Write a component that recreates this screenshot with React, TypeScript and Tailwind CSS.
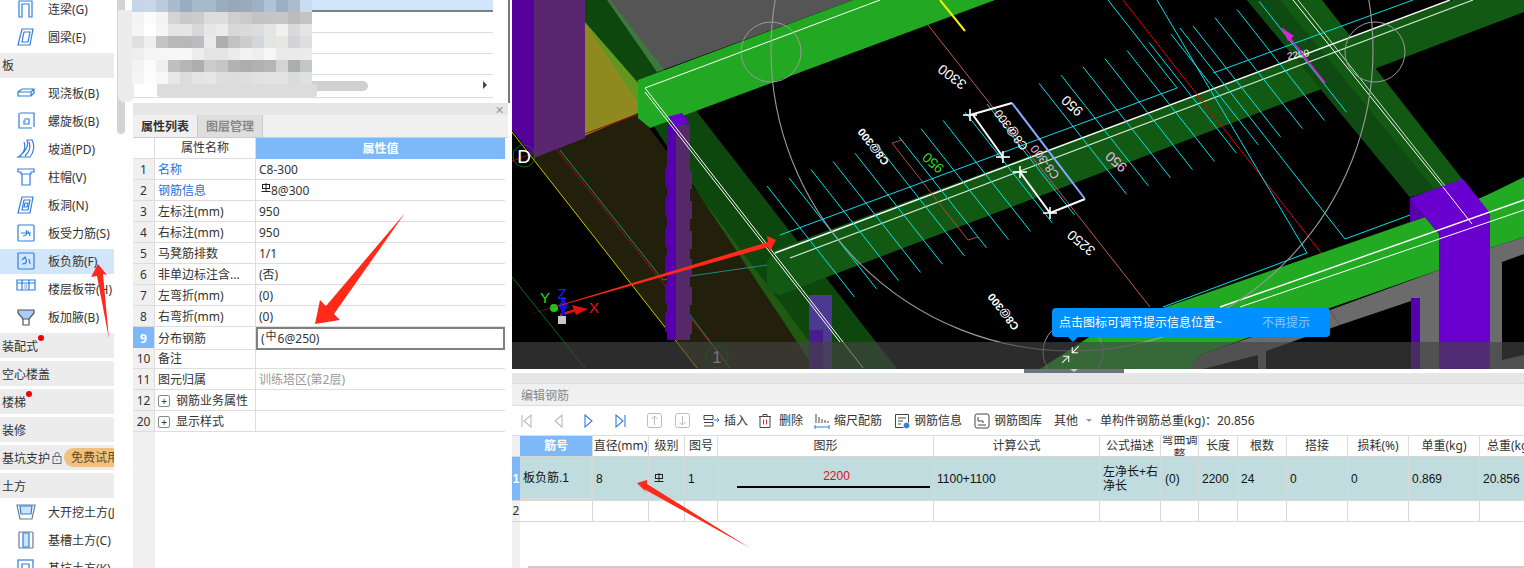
import React from "react";
import { Minimize2 } from "lucide-react";

const FONT = { fontFamily: '"Noto Sans", "Noto Sans CJK SC", sans-serif' };

const blue = "#2f7fe0";

function SideIcon({ children }: { children: React.ReactNode }) {
	return (
		<svg width="20" height="20" viewBox="0 0 20 20" fill="none" stroke={blue} strokeWidth="1.2" className="shrink-0">
			{children}
		</svg>
	);
}

const sideIcons: Record<string, React.ReactNode> = {
	lian: <path d="M3 18V2h13v16h-3V5H6v13z" />,
	quan: (
		<>
			<path d="M6 2h11l-3 16H2z" />
			<path d="M8 5h6l-2 10H6z" />
		</>
	),
	xian: <path d="M2 9l4-3h12v4l-3 3H2zM2 9h13v4M15 9l3-3" />,
	luo: (
		<>
			<path d="M4 2h14v14M3 2v15h13" />
			<path d="M8 8h5v5H8v-3h2" />
		</>
	),
	po: <path d="M11 1c2 5-1 12-9 17h12c4-5 5-12 2-17zM8 3c2 5 0 10-4 14M13 3c2 5 0 10-4 14" />,
	zhu: <path d="M2 2h16v3h-3v2H5V5H2zM6 7v11h8V7" />,
	dong: (
		<>
			<path d="M6 2h11l-3 16H2z" />
			<path d="M8 5h6l-2 10H6z" />
			<path d="M9 8h3l-1 4H8z" />
		</>
	),
	shou: (
		<>
			<rect x="2" y="2" width="16" height="16" rx="1" />
			<path d="M5 10h10M7 13c3 0 5-2 3-6M12 8l2 5" />
		</>
	),
	fu: (
		<>
			<rect x="2" y="2" width="16" height="16" rx="1" />
			<path d="M6 13c4 0 6-2 3-7l-3 3M13 8l1 5" />
		</>
	),
	dai: (
		<>
			<path d="M1 1h18v10H1zM1 4h18M6 1v10M13 1v10" />
			<path d="M9 4v7M10.5 4v7" stroke="#9cc4f4" />
		</>
	),
	ye: (
		<>
			<path d="M2 3h16v3l-5 6H7L2 6z" fill="#a9cdf6" stroke="#555" />
			<path d="M7 12v6h6v-6" stroke="#555" />
		</>
	),
	da: (
		<>
			<path d="M1 3h18l-3 14H4z" stroke="#6b7a90" />
			<path d="M4 4h12l-1 8H5z" fill="#cfe3fa" />
		</>
	),
	cao: (
		<>
			<rect x="3" y="2" width="14" height="16" rx="1" stroke="#6b7a90" />
			<path d="M7 3h6v14H7z" fill="#cfe3fa" />
		</>
	),
	keng: (
		<>
			<rect x="2" y="2" width="15" height="16" />
			<path d="M6 6h7v10H6z" />
		</>
	),
};

function SideItem({ icon, label, active }: { icon: string; label: string; active?: boolean }) {
	return (
		<div className="flex items-center h-[28px]">
			<div className={`flex items-center w-[114px] h-[25px] pl-[16px] gap-[12px] whitespace-nowrap overflow-hidden ${active ? "bg-[#d2e6fb]" : ""}`}>
				<SideIcon>{sideIcons[icon]}</SideIcon>
				<span className="pt-[2px]">{label}</span>
			</div>
		</div>
	);
}

function SideHead({ label, dot, children }: { label: string; dot?: number; children?: React.ReactNode }) {
	return (
		<div className="relative flex items-center w-[114px] h-[25px] mb-[3px] pl-[2px] bg-[#ececec] whitespace-nowrap overflow-hidden">
			<span className="pt-[2px]">{label}</span>
			{children}
			{dot ? <span className={`absolute top-[2px] w-[6px] h-[6px] rounded-full bg-[#f00000] ${dot === 1 ? "left-[38px]" : "left-[26px]"}`} /> : null}
		</div>
	);
}

function Sidebar() {
	return (
		<div className="relative w-[133px] shrink-0 -mt-[5px] text-[12px] text-[#333]">
			<SideItem icon="lian" label="连梁(G)" />
			<SideItem icon="quan" label="圆梁(E)" />
			<div className="flex items-center w-[114px] h-[25px] mt-[2px] mb-px pl-[2px] bg-[#ececec]">板</div>
			<SideItem icon="xian" label="现浇板(B)" />
			<SideItem icon="luo" label="螺旋板(B)" />
			<SideItem icon="po" label="坡道(PD)" />
			<SideItem icon="zhu" label="柱帽(V)" />
			<SideItem icon="dong" label="板洞(N)" />
			<SideItem icon="shou" label="板受力筋(S)" />
			<SideItem icon="fu" label="板负筋(F)" active />
			<SideItem icon="dai" label="楼层板带(H)" />
			<SideItem icon="ye" label="板加腋(B)" />
			<div className="h-[2px]" />
			<SideHead label="装配式" dot={1} />
			<SideHead label="空心楼盖" />
			<SideHead label="楼梯" dot={2} />
			<SideHead label="装修" />
			<SideHead label="基坑支护">
				<svg width="10" height="12" viewBox="0 0 10 12" fill="none" stroke="#667" className="ml-[2px] shrink-0">
					<rect x="1" y="4.5" width="8" height="7" />
					<path d="M3 4.5V2.5a2 2 0 014 0v2M5 7v2" />
				</svg>
				<span className="ml-[2px] pl-[7px] h-[19px] w-[60px] shrink-0 flex items-center rounded-l-full bg-[#eec27e] text-[#6b4a1a]">免费试用</span>
			</SideHead>
			<div className="flex items-center w-[114px] h-[25px] pl-[2px] bg-[#ececec]">
				<span className="pt-[2px]">土方</span>
			</div>
			<SideItem icon="da" label="大开挖土方(J" />
			<SideItem icon="cao" label="基槽土方(C)" />
			<SideItem icon="keng" label="基坑土方(K)" />
			<div className="absolute left-[117px] top-[5px] w-[8px] h-[134px] bg-[#d4d4d4] rounded-b-[4px]" />
		</div>
	);
}

const mosaic = [
	["c4d6e8", "c8d8e8", "bccbdb", "a8bccd", "98adc0", "a6b9ca", "a6b9ca", "9aacbe", "96a8ba", "98aabc", "9fb2c5", "afc4d9", "9cb0c4", "abbccd", "c9dcf0"],
	["f4f4f4", "fbfbfb", "f3f3f3", "d4d4d4", "c8c9cb", "cccccc", "dcdcdc", "dddddd", "cfcfcf", "cbcac8", "c3c3c3", "c5c5c5", "c6c6c6", "bcbcbc", "c4c4c4"],
	["f5f5f5", "fefefe", "f5f5f5", "e5e5e5", "e5e5e5", "d7d7d7", "e7e7e7", "ebebeb", "d7d7d7", "dadada", "dcdcdc", "e3e4e6", "f0f0f0", "dadada", "e5e5e5"],
	["e0e0e0", "eeeeee", "c4c4c4", "bdb8b8", "b8b8b8", "bcbcc0", "e8eae9", "adadad", "c2c2c0", "cdcdcd", "d3d7db", "e4e4e2", "e8e6e1", "d2d3d7", "dcdee0"],
	["eeeeee", "f5f5f5", "f6f6f6", "f6f6f6", "f6f8f7", "efedeb", "e4e4e4", "e4e4e4", "ebebeb", "f2f2f2", "eeeeee", "f6f6f6", "eaeaea", "eaeaea", "ebebeb"],
	["f3f3f3", "fbfbfb", "f0efed", "c0c0c0", "b5b6b8", "adadad", "cccccc", "c6c6c6", "b3b1b2", "adadab", "b2b0b1", "b5b5b5", "d4d4d4", "adadad", "c5c6c8"],
	["f5f5f5", "fdfdfd", "f8f8f8", "e8e8e8", "dcdcdc", "e4e4e4", "e6e6e6", "dedede", "dddddd", "dededc", "e0e2e1", "e2e4e3", "e3e3e3", "d8dcdb", "dde1e0"],
];

function Mosaic() {
	return (
		<>
			<div className="absolute left-[118px] top-[10px] w-[16px] h-[92px] bg-[#ececec] rounded-b-[6px]" />
			<div className="absolute left-[157px] top-[84px] w-[160px] h-[13px] bg-[#dcdcdc] rounded-[3px]" />
			<div className="absolute left-[132px] top-0 grid grid-cols-[repeat(15,12px)] auto-rows-[12px]">
				{mosaic.flat().map((c, i) => (
					<div key={i} style={{ backgroundColor: `#${c}` }} />
				))}
			</div>
		</>
	);
}

function TopList() {
	return (
		<div className="h-[103px] shrink-0 -ml-px">
			<div className="w-[361px] h-[12px] bg-[#d2e6fb] border-b-2 border-[#808080]" />
			<div className="w-[361px] h-[21px] border-b border-[#ddd]" />
			<div className="w-[361px] h-[21px] border-b border-[#ddd]" />
			<div className="w-[361px] h-[21px] border-b border-[#ddd]" />
			<div className="flex items-center w-[361px] h-[23px] border-b border-[#ddd] relative">
				<div className="ml-[25px] w-[211px] h-[10px] rounded-full bg-[#d0d0d0]" />
				<div className="absolute left-[351px] top-[6px] w-0 h-0 border-y-[4px] border-y-transparent border-l-[4px] border-l-[#445]" />
			</div>
		</div>
	);
}

const props: [string, string, string, string?][] = [
	["1", "名称", "C8-300", "blue"],
	["2", "钢筋信息", "sym:8@300", "blue"],
	["3", "左标注(mm)", "950"],
	["4", "右标注(mm)", "950"],
	["5", "马凳筋排数", "1/1"],
	["6", "非单边标注含...", "(否)"],
	["7", "左弯折(mm)", "(0)"],
	["8", "右弯折(mm)", "(0)"],
	["9", "分布钢筋", "(sel)"],
	["10", "备注", ""],
	["11", "图元归属", "训练塔区(第2层)", "gray"],
	["12", "+钢筋业务属性", ""],
	["20", "+显示样式", ""],
];

function RebarSym({ className }: { className?: string }) {
	return (
		<svg width="10" height="11" viewBox="0 0 10 11" fill="none" stroke="#222" strokeWidth="1" className={className}>
			<rect x="1.5" y="1.5" width="7" height="4" />
			<path d="M5 0v8M0.5 8.5h9" />
		</svg>
	);
}

function PropRow({ row }: { row: (typeof props)[number] }) {
	const [no, name, value, tone] = row;
	const selected = no === "9";
	const plus = name.startsWith("+");
	return (
		<div className="grid grid-cols-[22px_101px_249px] h-[21px]">
			<div className={`flex items-center justify-center pt-px border-r border-b border-[#ddd] ${selected ? "bg-[#7db8f8] text-white font-bold" : "bg-[#f0f0f0]"}`}>{no}</div>
			<div className={`flex items-center pl-[3px] pt-px border-r border-b border-[#ddd] whitespace-nowrap overflow-hidden ${tone === "blue" ? "text-[#2a6fe0]" : ""}`}>
				{plus ? (
					<>
						<span className="flex items-center justify-center w-[12px] h-[12px] mr-[6px] border border-[#888] rounded-[2px] text-[10px] leading-none">+</span>
						{name.slice(1)}
					</>
				) : (
					name
				)}
			</div>
			<div className={`flex items-center pl-[3px] pt-px whitespace-nowrap ${selected ? "border-2 border-[#808080] pl-[2px]" : "border-b border-[#ddd]"} ${tone === "gray" ? "text-[#999]" : ""}`}>
				{value === "sym:8@300" ? (
					<>
						<RebarSym className="ml-[2px] -mt-[4px]" />
						8@300
					</>
				) : selected ? (
					<>
						(<span className="text-[11px] -mt-[5px] mx-px">中</span>6@250)
					</>
				) : (
					value
				)}
			</div>
		</div>
	);
}

function PropertyPanel() {
	return (
		<div className="flex flex-col w-[375px] h-full shrink-0 text-[12px] text-[#333]">
			<TopList />
			<div className="flex-1 flex flex-col">
				<div className="flex items-center justify-end h-[12px] pr-[4px] bg-[#e6e6e6] text-[#999] text-[11px] leading-none">✕</div>
				<div className="flex h-[23px] bg-[#f0f0f0] border-b border-[#ccc]">
					<div className="flex items-center justify-center w-[65px] pt-px font-bold border-r border-[#ccc]">属性列表</div>
					<div className="flex items-center justify-center w-[65px] pt-px bg-[#dedede] text-[#888] font-bold border-r border-[#ccc]">图层管理</div>
				</div>
				<div className="grid grid-cols-[22px_101px_249px] h-[21px]">
					<div className="border-r border-b border-[#ddd]" />
					<div className="flex items-center justify-center border-r border-b border-[#ddd]">属性名称</div>
					<div className="flex items-center justify-center bg-[#7db8f8] text-white font-bold">属性值</div>
				</div>
				{props.map((r) => (
					<PropRow key={r[0]} row={r} />
				))}
				<div className="flex-1 w-[22px] bg-[#f0f0f0]" />
			</div>
		</div>
	);
}

function Scene() {
	const cyanA = Array.from({ length: 11 }, (_, i) => [767 + 22 * i, 186 - 8.2 * i]);
	const cyanB = Array.from({ length: 11 }, (_, i) => [1039 + 22 * i, 83.3 - 8.2 * i]);
	const bumps = [167, 197, 227, 255, 283, 312];
	const label = { fontFamily: '"Liberation Sans", sans-serif', fontSize: 14 };
	const marks: [number, number][] = [
		[970, 115],
		[1003, 157],
		[1020, 172],
		[1050, 213],
	];
	return (
		<svg viewBox="512 0 1012 369" width="1012" height="369" className="block">
			<rect x="512" y="0" width="1012" height="369" fill="#000" />
			<polygon points="607,0 853,0 657,72" fill="#555" />
			<polygon points="585,22 640,85 638,115 585,138" fill="#8f8a20" />
			<polygon points="533,158 638,113 830,369 697,369" fill="#22200a" />
			<polygon points="570,0 610,0 897,369 815,369" fill="#22aa22" opacity="0.42" />
			<line x1="512" y1="132" x2="697" y2="368" stroke="#c8c800" />
			<line x1="512" y1="277" x2="585" y2="368" stroke="#0a6a0a" />
			<line x1="512" y1="161" x2="638" y2="114" stroke="#a01000" />
			<line x1="557" y1="150" x2="730" y2="368" stroke="#a01000" />
			<polyline points="560,150 663,280 767,265" stroke="#1d8a80" fill="none" />
			<line x1="690" y1="315" x2="730" y2="368" stroke="#1d8a80" />

			<polygon points="512,0 534,0 534,158 512,130" fill="#55009a" />
			<polygon points="534,0 585,0 585,138 534,158" fill="#5a2670" />

			<polygon points="638,80 853,0 995,0 650,128 638,118" fill="#22a822" />

			<rect x="667" y="125" width="9" height="215" fill="#5500aa" />
			<rect x="676" y="125" width="14" height="215" fill="#55286a" />
			{bumps.map((y) => (
				<g key={y}>
					<rect x="665" y={y} width="11" height="20" fill="#5500aa" />
					<rect x="676" y={y + 4} width="16" height="18" fill="#55286a" />
				</g>
			))}
			<polygon points="667,117 682,113 690,123 675,127" fill="#6a00d0" />
			<rect x="809" y="295" width="23" height="74" fill="#4a3a90" />
			<rect x="809" y="330" width="14" height="39" fill="#4a1a90" />

			<polygon points="775,250 1453,0 1524,0 1524,12 780,295 767,290 767,262" fill="#125a14" />
			<polygon points="1247,0 1322,0 1463,180 1410,197" fill="#125a14" />
			<polygon points="1247,0 1280,0 1435,190 1410,197" fill="#0f4a12" />
			<polyline points="880,0 645,88 843,342 863,368" stroke="#fff" fill="none" />
			<polyline points="645,92 840,342" stroke="#fff" fill="none" />
			<line x1="775" y1="253" x2="1450" y2="0" stroke="#fff" strokeWidth="1.4" />
			<line x1="790" y1="258" x2="1473" y2="0" stroke="#cfe8cf" strokeWidth="1.2" />
			<line x1="1293" y1="0" x2="1443" y2="187" stroke="#fff" />
			<line x1="1298" y1="0" x2="1472" y2="220" stroke="#cfe8cf" />

			<polyline points="928,25 1150,307" stroke="#c05a5a" fill="none" />
			<polyline points="902,140 892,143 968,240 978,237" stroke="#b04a4a" fill="none" />
			<line x1="1123" y1="0" x2="1322" y2="254" stroke="#e00000" />
			{cyanA.concat(cyanB).map(([x, y], i) => (
				<line key={i} x1={x} y1={y} x2={x + 87.5} y2={y + 111} stroke="#00e0e8" strokeWidth="1" />
			))}
			<polyline points="1108,0 1177,88 780,235" stroke="#00e0e8" fill="none" />
			<polyline points="1157,0 1307,253 1163,307" stroke="#00e0e8" fill="none" />
			<polyline points="1180,28 1345,239 1410,215" stroke="#00e0e8" fill="none" />
			<line x1="1213" y1="73" x2="1413" y2="0" stroke="#00e0e8" />
			<line x1="1477" y1="200" x2="1524" y2="180" stroke="#00e0e8" />

			<polygon points="1425,217 1439,234 1439,270 1330,308 1200,355 1190,369 1040,369 1100,330" fill="#22ab22" />
			<polygon points="1477,200 1524,177 1524,237 1490,248" fill="#22ab22" />
			<polygon points="1330,310 1340,325 1266,351 1266,369 1258,369 1258,355 1203,369 1190,369 1200,355" fill="#6b6b6b" />
			<polygon points="1330,310 1439,270 1439,294 1420,298 1340,325" fill="#6b6b6b" />
			<rect x="1411" y="298" width="9" height="71" fill="#5500aa" />
			<rect x="1420" y="294" width="19" height="75" fill="#6b6b6b" />
			<polygon points="1490,248 1524,237 1524,369 1490,369" fill="#6b6b6b" />
			<polygon points="1502,262 1524,254 1524,355 1502,360" fill="#000" />
			<polygon points="1410,198 1463,179 1490,213 1490,369 1439,369 1439,234 1425,217 1410,222" fill="#6a00d0" />
			<polygon points="1410,198 1425,217 1410,222" fill="#5500aa" />
			<line x1="1220" y1="307" x2="1524" y2="200" stroke="#fff" strokeWidth="1.4" />
			<line x1="1240" y1="307" x2="1524" y2="210" stroke="#fff" />
			<line x1="1443" y1="187" x2="1472" y2="224" stroke="#fff" />

			<circle cx="1072" cy="50" r="301" fill="none" stroke="#9a9a9a" strokeWidth="1.1" />
			<circle cx="771" cy="52" r="30" fill="none" stroke="#9a9a9a" />
			<circle cx="1375" cy="52" r="30" fill="none" stroke="#9a9a9a" />
			<circle cx="1073" cy="352" r="30" fill="none" stroke="#9a9a9a" />
			<line x1="940" y1="0" x2="965" y2="31" stroke="#f4f000" strokeWidth="2" />

			<g stroke="#fff" strokeWidth="2" fill="none">
				<polyline points="1012,103 970,115" />
				<line x1="973" y1="115" x2="1003" y2="157" />
				<polyline points="1020,172 1050,213 1085,199" />
			</g>
			<line x1="1012" y1="103" x2="1085" y2="199" stroke="#88aaff" strokeWidth="2" />
			{marks.map(([x, y]) => (
				<g key={x} stroke="#fff" strokeWidth="1.6">
					<line x1={x - 7} y1={y} x2={x + 7} y2={y} />
					<line x1={x} y1={y - 6} x2={x} y2={y + 6} />
				</g>
			))}
			<g style={label} fill="#fff">
				<text transform="translate(952 77) rotate(217)" textAnchor="middle" y="5">3300</text>
				<text transform="translate(1072 106) rotate(222)" textAnchor="middle" y="5">950</text>
				<text transform="translate(1116 162) rotate(222)" textAnchor="middle" y="5" fill="#f0b8e8">950</text>
				<text transform="translate(1081 243) rotate(220)" textAnchor="middle" y="5">3250</text>
				<text transform="translate(933 163) rotate(222)" textAnchor="middle" y="5" fill="#2fd62f">950</text>
				<text transform="translate(873 147) rotate(232)" textAnchor="middle" y="4" fontSize="11" fontWeight="bold">C8@300</text>
				<text transform="translate(1003 312) rotate(232)" textAnchor="middle" y="4" fontSize="11" fontWeight="bold">C8@300</text>
				<text transform="translate(1011 130) rotate(233)" textAnchor="middle" y="4" fontSize="12">C8@300</text>
				<text transform="translate(1045 162) rotate(233)" textAnchor="middle" y="4" fontSize="12" fill="#f0b8e8">C8-300</text>
				<text x="1298" y="58" fontSize="10" textAnchor="middle" transform="rotate(-10 1298 54)">2200</text>
			</g>
			<line x1="1282" y1="28" x2="1325" y2="83" stroke="#e020e0" strokeWidth="1.6" />
			<polygon points="1282,28 1294,36 1288,41" fill="#e020e0" />

			<circle cx="524" cy="156" r="11" fill="none" stroke="#0a6a0a" />
			<text x="524" y="163" textAnchor="middle" fill="#fff" style={{ ...label, fontSize: 19 }}>D</text>

			<line x1="560" y1="315" x2="582" y2="308" stroke="#e01010" strokeWidth="2.5" />
			<polygon points="572,305 588,309 576,315" fill="#e01010" />
			<circle cx="554" cy="308" r="4" fill="#10d010" />
			<rect x="561" y="297" width="4" height="18" fill="#1010e0" />
			<circle cx="563" cy="306" r="4" fill="#1010e0" />
			<rect x="558" y="316" width="8" height="8" fill="#c8c8c8" />
			<text x="545" y="303" textAnchor="middle" fill="#10e010" style={{ ...label, fontSize: 15 }}>Y</text>
			<text x="562" y="299" textAnchor="middle" fill="#2020f0" style={{ ...label, fontSize: 15 }}>Z</text>
			<text x="594" y="313" textAnchor="middle" fill="#f01010" style={{ ...label, fontSize: 15 }}>X</text>

			<rect x="512" y="342" width="1012" height="27" fill="#444" opacity="0.65" />
			<circle cx="717" cy="357" r="11" fill="none" stroke="#1a5a1a" />
			<text x="717" y="363" textAnchor="middle" fill="#777" style={{ ...label, fontSize: 16 }}>1</text>
		</svg>
	);
}

function Tip() {
	return (
		<>
			<div className="absolute left-[540px] top-[308px] flex items-center w-[278px] h-[29px] pl-[7px] rounded-[4px] bg-[#0090ff] text-white text-[12px] whitespace-nowrap">
				<span className="w-[203px]">点击图标可调节提示信息位置~</span>
				<span className="text-[#86c7ff]">不再提示</span>
			</div>
			<div className="absolute left-[556px] top-[337px] w-0 h-0 border-x-[5px] border-x-transparent border-t-[5px] border-t-[#0090ff]" />
			<Minimize2 size={21} color="#fff" strokeWidth={1.2} className="absolute left-[548px] top-[344px]" />
		</>
	);
}

const columns = ["筋号", "直径(mm)", "级别", "图号", "图形", "计算公式", "公式描述", "弯曲调整", "长度", "根数", "搭接", "损耗(%)", "单重(kg)", "总重(kg)"];
const colClass = "grid grid-cols-[8px_73px_56px_36px_33px_216px_166px_61px_38px_39px_49px_61px_61px_71px_60px]";

function NavIcon({ flip, bar, color }: { flip?: boolean; bar?: boolean; color: string }) {
	return (
		<svg width="12" height="14" viewBox="0 0 12 14" fill="none" stroke={color} strokeWidth="1.1" className={flip ? "-scale-x-100" : ""}>
			<path d="M2 1v12l7-6z" />
			{bar ? <path d="M11 1v12" /> : null}
		</svg>
	);
}

function BoxArrow({ down }: { down?: boolean }) {
	return (
		<svg width="15" height="15" viewBox="0 0 15 15" fill="none" stroke="#bbb" className="shrink-0">
			<rect x="0.5" y="0.5" width="14" height="14" rx="2" />
			<path d={down ? "M7.5 3v9M4.5 9l3 3 3-3" : "M7.5 12V3M4.5 6l3-3 3 3"} />
		</svg>
	);
}

function ToolIcon({ children }: { children: React.ReactNode }) {
	return (
		<svg width="16" height="16" viewBox="0 0 16 16" fill="none" stroke="#444" strokeWidth="1" className="shrink-0">
			{children}
		</svg>
	);
}

function Toolbar() {
	return (
		<div className="flex items-center h-[29px] pl-[9px] whitespace-nowrap text-[12px] text-[#333]">
			<div className="flex items-center gap-[19px]">
				<NavIcon flip bar color="#bbb" />
				<NavIcon flip color="#bbb" />
				<NavIcon color={blue} />
				<NavIcon bar color={blue} />
			</div>
			<div className="flex items-center gap-[13px] ml-[21px]">
				<BoxArrow />
				<BoxArrow down />
			</div>
			<div className="flex items-center gap-[4px] ml-[13px]">
				<svg width="17" height="14" viewBox="0 0 17 14" fill="none" stroke="#444" className="shrink-0">
					<path d="M1 1.5h9v4H1zM1 8.5h9v3.500H1" />
					<path d="M11 6h5M14 4l2 2-2 2" stroke={blue} />
				</svg>
				<span className="w-[33px]">插入</span>
			</div>
			<div className="flex items-center gap-[6px]">
				<ToolIcon>
					<path d="M2 3.500h12M6 3.500V1.500h4v2M3 3.500v11h10v-11" />
					<path d="M6.500 6.500v5M9.500 6.500v5" stroke="#e03030" />
				</ToolIcon>
				<span className="w-[35px]">删除</span>
			</div>
			<div className="flex items-center gap-[4px]">
				<ToolIcon>
					<path d="M2 1v9M5 4v6M8 6v4M11 7v3M14 8v2" />
					<path d="M1 14h14M1 12v4M15 12v4" stroke={blue} />
				</ToolIcon>
				<span className="w-[60px]">缩尺配筋</span>
			</div>
			<div className="flex items-center gap-[4px]">
				<ToolIcon>
					<path d="M1.500 1.500h13v8M1.500 1.500v13h8M4 5h8M4 8h5M4 11h3" />
					<circle cx="12.500" cy="12.500" r="2.500" fill={blue} stroke={blue} />
				</ToolIcon>
				<span className="w-[60px]">钢筋信息</span>
			</div>
			<div className="flex items-center gap-[4px]">
				<ToolIcon>
					<rect x="1" y="1" width="14" height="14" rx="2" />
					<path d="M4 4v4h5v2M4 12h8" />
				</ToolIcon>
				<span className="w-[60px]">钢筋图库</span>
			</div>
			<span>其他</span>
			<div className="ml-[8px] w-0 h-0 border-x-[3px] border-x-transparent border-t-[3px] border-t-[#999]" />
			<span className="ml-[8px]">单构件钢筋总重(kg)：20.856</span>
		</div>
	);
}

function Cell({ children, className = "" }: { children?: React.ReactNode; className?: string }) {
	return <div className={`flex items-center px-[3px] border-r border-[#d8d8d8] overflow-hidden ${className}`}>{children}</div>;
}

function RebarTable() {
	return (
		<div className="relative flex-1 text-[12px] text-[#333] overflow-hidden">
			<div className={`${colClass} h-[21px] border-t border-[#ddd]`}>
				<div className="bg-[#f0f0f0]" />
				{columns.map((c, i) =>
					i === 7 ? (
						<div key={c} className="border-r border-[#ddd] overflow-hidden">
							<div className="-mt-[4px] text-center leading-[15px] break-all">{c}</div>
						</div>
					) : (
						<div key={c} className={`flex items-center justify-center border-r border-[#ddd] whitespace-nowrap ${i === 0 ? "bg-[#7db8f8] text-white font-bold" : ""}`}>
							{c}
						</div>
					),
				)}
			</div>
			<div className={`${colClass} h-[45px] bg-[#c0dcdf] border-y border-[#d8d8d8] text-[#111]`} style={{ fontFamily: '"Liberation Sans", "Noto Sans CJK SC", sans-serif' }}>
				<div className="flex items-center justify-center bg-[#7db8f8] text-white font-bold">1</div>
				<Cell className="border-r-2 border-b-2 border-[#808080]">板负筋.1</Cell>
				<Cell>8</Cell>
				<Cell className="pl-[5px]">
					<RebarSym />
				</Cell>
				<Cell>1</Cell>
				<div className="flex flex-col items-center justify-center border-r border-[#d8d8d8]">
					<span className="ml-[22px] leading-[14px] text-[#e01010]">2200</span>
					<div className="ml-[16px] w-[193px] h-[2px] mt-[3px] bg-black" />
				</div>
				<Cell>1100+1100</Cell>
				<Cell className="leading-[14px] whitespace-nowrap">
					<span>
						左净长+右
						<br />
						净长
					</span>
				</Cell>
				<Cell className="pl-[4px]">(0)</Cell>
				<Cell>2200</Cell>
				<Cell>24</Cell>
				<Cell>0</Cell>
				<Cell>0</Cell>
				<Cell>0.869</Cell>
				<Cell>20.856</Cell>
			</div>
			<div className={`${colClass} h-[21px] border-b border-[#d8d8d8]`}>
				<div className="flex items-center justify-center bg-[#f0f0f0]">2</div>
				{columns.map((c) => (
					<div key={c} className="border-r border-[#d8d8d8]" />
				))}
			</div>
			<div className="absolute left-0 top-[87px] bottom-0 w-[8px] bg-[#f0f0f0]" />
			<div className="absolute left-[16px] bottom-0 w-[996px] h-[2px] bg-[#ccc]" />
		</div>
	);
}

function EditPanel() {
	return (
		<div className="flex-1 flex flex-col min-h-0">
			<div className="h-[11px] bg-[#e6e6e6] border-b border-[#ddd]" />
			<div className="flex items-center h-[22px] pl-[9px] pt-[2px] bg-[#f0f0f0] border-b border-[#ddd] text-[12px] text-[#888]">编辑钢筋</div>
			<Toolbar />
			<RebarTable />
		</div>
	);
}

// 红色箭头是截图上后加的标注，盖在所有内容上面
function Arrows() {
	return (
		<svg viewBox="0 0 1524 568" width="1524" height="568" className="absolute inset-0 pointer-events-none" fill="#ff2a1a">
			<polygon points="98,264 107,275 103,274 109,339 97,276 91,277" />
			<polygon points="315,324 320,300 326,306 405,213 334,314 340,320" />
			<polygon points="776,240 767,236 768,242 527,315 768,247 770,251" />
			<polygon points="637,483 647,480 647,484 750,548 644,489 647,493" />
		</svg>
	);
}

export default function App() {
	return (
		<div className="relative flex w-[1524px] h-[568px] overflow-hidden bg-white" style={FONT}>
			<Sidebar />
			<PropertyPanel />
			<div className="w-[4px] shrink-0 h-[103px] border-l-2 border-[#777]" />
			<div className="relative flex-1 flex flex-col min-w-0">
				<Scene />
				<div className="h-[4px] shrink-0 bg-white">
					<div className="flex justify-center ml-[512px] w-[100px] h-full bg-[#6b7580]">
						<div className="w-0 h-0 border-x-[4px] border-x-transparent border-t-[3px] border-t-[#ccc]" />
					</div>
				</div>
				<EditPanel />
				<Tip />
			</div>
			<Mosaic />
			<Arrows />
		</div>
	);
}
